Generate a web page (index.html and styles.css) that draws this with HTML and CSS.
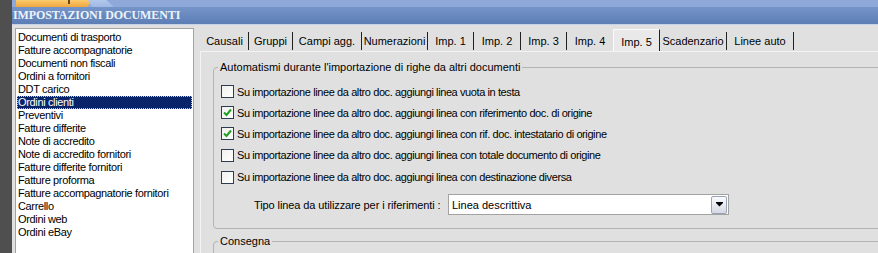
FILE: index.html
```html
<!DOCTYPE html>
<html lang="it">
<head>
    <meta charset="UTF-8">
    <title>Impostazioni documenti</title>
    <link rel="stylesheet" href="styles.css">
</head>
<body>
    <div class="window">
        <div class="edge"></div>
        <div class="main">
            <div class="topbar">
                <div class="tab-orange"><span class="tab-glyph"></span></div>
                <div class="tab-blue"></div>
            </div>
            <div class="titlebar">IMPOSTAZIONI DOCUMENTI</div>
            <div class="workarea">
                <ul class="doclist">
                    <li>Documenti di trasporto</li>
                    <li>Fatture accompagnatorie</li>
                    <li>Documenti non fiscali</li>
                    <li>Ordini a fornitori</li>
                    <li>DDT carico</li>
                    <li class="selected">Ordini clienti</li>
                    <li>Preventivi</li>
                    <li>Fatture differite</li>
                    <li>Note di accredito</li>
                    <li>Note di accredito fornitori</li>
                    <li>Fatture differite fornitori</li>
                    <li>Fatture proforma</li>
                    <li>Fatture accompagnatorie fornitori</li>
                    <li>Carrello</li>
                    <li>Ordini web</li>
                    <li>Ordini eBay</li>
                </ul>

                <div class="tabpanel">
                    <div class="tabs">
                        <div class="tab t-causali">Causali</div>
                        <div class="tab t-gruppi">Gruppi</div>
                        <div class="tab t-campi">Campi agg.</div>
                        <div class="tab t-numerazioni">Numerazioni</div>
                        <div class="tab t-imp">Imp. 1</div>
                        <div class="tab t-imp wide">Imp. 2</div>
                        <div class="tab t-imp">Imp. 3</div>
                        <div class="tab t-imp before-active">Imp. 4</div>
                        <div class="tab t-imp active">Imp. 5</div>
                        <div class="tab t-scadenzario">Scadenzario</div>
                        <div class="tab t-linee">Linee auto</div>
                    </div>

                    <div class="tabbody">
                        <fieldset class="group">
                            <legend>Automatismi durante l'importazione di righe da altri documenti</legend>
                            <div class="check-row">
                                <span class="checkbox"></span>
                                <span>Su importazione linee da altro doc. aggiungi linea vuota in testa</span>
                            </div>
                            <div class="check-row">
                                <span class="checkbox checked"><svg width="9" height="9" viewBox="0 0 9 9"><path d="M1 4.5 L3.5 7 L8 1.5" fill="none" stroke="#21a121" stroke-width="2"/></svg></span>
                                <span>Su importazione linee da altro doc. aggiungi linea con riferimento doc. di origine</span>
                            </div>
                            <div class="check-row">
                                <span class="checkbox checked"><svg width="9" height="9" viewBox="0 0 9 9"><path d="M1 4.5 L3.5 7 L8 1.5" fill="none" stroke="#21a121" stroke-width="2"/></svg></span>
                                <span>Su importazione linee da altro doc. aggiungi linea con rif. doc. intestatario di origine</span>
                            </div>
                            <div class="check-row">
                                <span class="checkbox"></span>
                                <span>Su importazione linee da altro doc. aggiungi linea con totale documento di origine</span>
                            </div>
                            <div class="check-row">
                                <span class="checkbox"></span>
                                <span>Su importazione linee da altro doc. aggiungi linea con destinazione diversa</span>
                            </div>
                            <div class="select-row">
                                <span class="select-label">Tipo linea da utilizzare per i riferimenti :</span>
                                <div class="combo">
                                    <span class="combo-value">Linea descrittiva</span>
                                    <span class="combo-btn"><svg width="7" height="5" viewBox="0 0 7 5"><rect x="0" y="0" width="7" height="1" fill="#000"/><path d="M0 1 H7 L3.5 4.5 Z" fill="#000"/></svg></span>
                                </div>
                            </div>
                        </fieldset>

                        <fieldset class="group second">
                            <legend>Consegna</legend>
                        </fieldset>
                    </div>
                </div>
            </div>
        </div>
    </div>
</body>
</html>
```

FILE: styles.css
```css
body {
    margin: 0;
    background-color: #e0e0e0;
    font-family: "Liberation Sans", Arial, sans-serif;
    font-size: 11px;
    color: #000;
    overflow: hidden;
}

.window {
    display: flex;
    height: 253px;
}

.edge {
    width: 12px;
    flex: none;
    background: #4f4f4f;
}

.main {
    flex: 1;
    min-width: 0;
    display: flex;
    flex-direction: column;
}

/* strip of the outer tab bar */
.topbar {
    height: 7px;
    display: flex;
    padding-left: 4px;
    background: #8ea9d9;
}

.tab-orange {
    width: 76px;
    background: linear-gradient(#fbcb70, #f0a83f);
    clip-path: polygon(0 0, 100% 0, 94% 100%, 0 100%);
    position: relative;
}

.tab-glyph {
    position: absolute;
    left: 52px;
    top: 0;
    width: 2px;
    height: 4px;
    background: #6b4a1a;
}

.tab-blue {
    width: 26px;
    margin-left: -4px;
    background: linear-gradient(#b3c8ec, #9fb8e3);
    clip-path: polygon(0 0, 70% 0, 100% 100%, 15% 100%);
}

.titlebar {
    height: 17px;
    line-height: 17px;
    padding-left: 1px;
    background: linear-gradient(#7595c9, #5c7eb5);
    border-bottom: 1px solid #c5d2e8;
    color: #eef3fb;
    font-family: "Liberation Serif", "Times New Roman", serif;
    font-weight: bold;
    font-size: 12px;
    letter-spacing: -0.1px;
}

.workarea {
    flex: 1;
    display: flex;
    padding: 3px 0 0 3px;
    min-height: 0;
}

.doclist {
    list-style: none;
    margin: 0;
    padding: 2px 1px 0;
    width: 175px;
    flex: none;
    background: #fff;
    border: 1px solid #a3a3a3;
    border-bottom: none;
    letter-spacing: -0.35px;
}

.doclist li {
    height: 13px;
    line-height: 13px;
    padding-left: 1px;
    white-space: nowrap;
}

.doclist li.selected {
    background: #0a246a;
    color: #fff;
    outline: 1px dotted #c8c8a0;
    outline-offset: -1px;
}

.tabpanel {
    flex: 1;
    min-width: 0;
    margin-left: 6px;
    display: flex;
    flex-direction: column;
}

.tabs {
    display: flex;
    height: 22px;
    padding-left: 1px;
    margin-top: 1px;
}

.tab {
    height: 18px;
    line-height: 18px;
    margin-top: 3px;
    border-right: 1px solid #222;
    white-space: nowrap;
    text-align: center;
    box-sizing: border-box;
}

.t-causali { width: 48px; }
.t-gruppi { width: 44px; }
.t-campi { width: 69px; }
.t-numerazioni { width: 66px; }
.t-imp { width: 46px; }
.t-imp.wide { width: 47px; }
.t-scadenzario { width: 67px; }
.t-linee { width: 67px; }

.tab.before-active {
    border-right: none;
}

.tab.active {
    width: 47px;
    margin-top: 0;
    height: 22px;
    line-height: 24px;
    background: #e9e9e9;
    border-top: 1px solid #fafafa;
    border-left: 1px solid #fafafa;
}

.tabbody {
    flex: 1;
    border-top: 1px solid #f4f4f4;
    border-left: 1px solid #f4f4f4;
    padding: 9px 0 0 12px;
}

.group {
    margin: 0 -20px 0 0;
    padding: 7px 0 13px 4px;
    border: 1px solid #b3b3b3;
    border-radius: 4px;
}

.group legend {
    padding: 0 2px;
    line-height: 13px;
}

.group.second {
    margin-top: 6px;
    height: 30px;
}

.check-row {
    display: flex;
    align-items: center;
    height: 21px;
    padding-left: 3px;
    white-space: nowrap;
    letter-spacing: -0.4px;
}

.check-row:nth-child(n+5) {
    height: 22px;
}

.checkbox {
    width: 11px;
    height: 11px;
    margin-right: 3px;
    border: 1px solid #2e3b52;
    background: linear-gradient(135deg, #f0f0ee, #fff);
    display: flex;
    align-items: center;
    justify-content: center;
    flex: none;
}

.select-row {
    display: flex;
    align-items: center;
    margin-top: 6px;
    padding-left: 36px;
}

.select-label {
    width: 188px;
    margin-right: 6px;
    white-space: nowrap;
    letter-spacing: -0.1px;
}

.combo {
    width: 279px;
    height: 19px;
    border: 1px solid #a2a2a2;
    background: #fff;
    display: flex;
    align-items: center;
    justify-content: space-between;
    flex: none;
}

.combo-value {
    padding-left: 3px;
}

.combo-btn {
    width: 14px;
    height: 16px;
    margin-right: 1px;
    border: 1px solid #9aa3b5;
    border-radius: 2px;
    background: linear-gradient(#fafbfd, #d5d9e3);
    display: flex;
    align-items: center;
    justify-content: center;
}
```
